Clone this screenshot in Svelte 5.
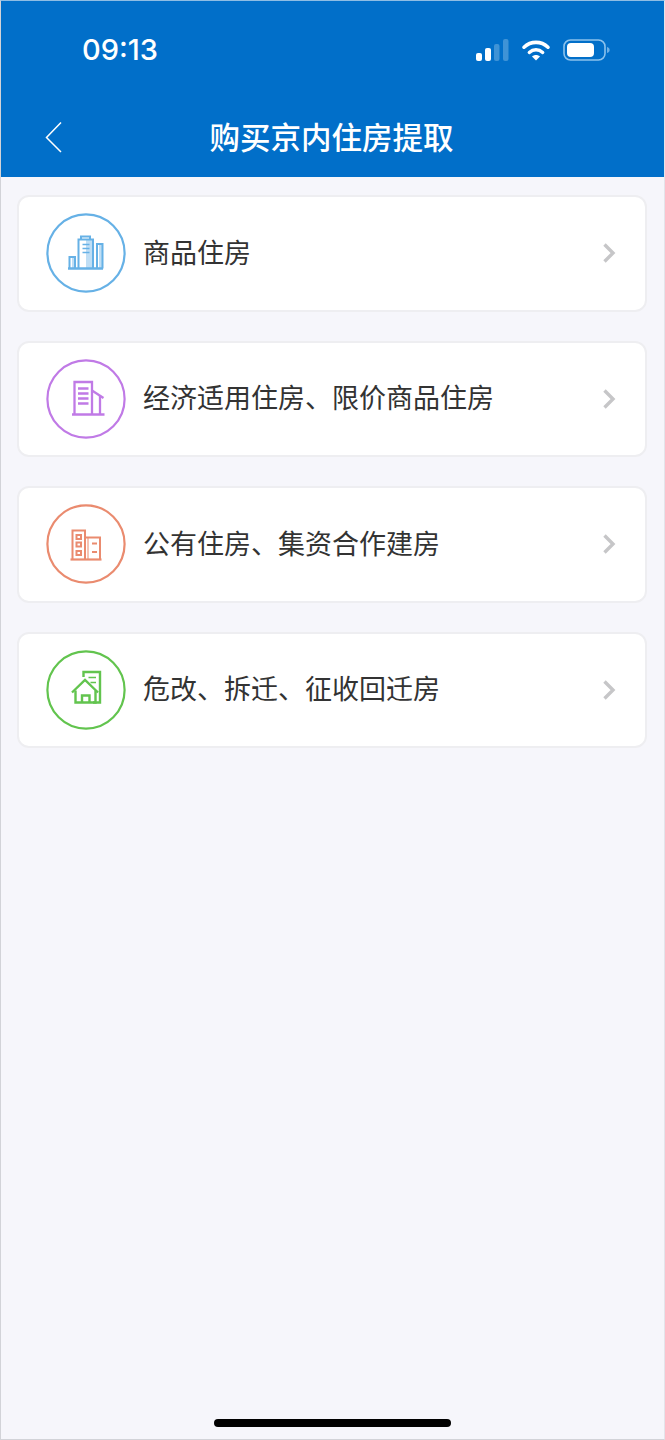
<script>
  const items = [
    { label: '商品住房', icon: 'a', color: '#66b1e6' },
    { label: '经济适用住房、限价商品住房', icon: 'b', color: '#c07ae6' },
    { label: '公有住房、集资合作建房', icon: 'c', color: '#ea8b6f' },
    { label: '危改、拆迁、征收回迁房', icon: 'd', color: '#62c44e' }
  ];
</script>

<div class="page">
  <header class="header">
    <div class="status">
      <span class="time">09:13</span>
      <div class="status-icons">
        <svg class="signal" width="34" height="22" viewBox="0 0 34 22" aria-hidden="true">
          <rect x="1" y="14" width="6" height="8" rx="2" fill="#fff" />
          <rect x="10" y="9" width="6" height="13" rx="2" fill="#fff" />
          <rect x="19" y="5" width="5.5" height="17" rx="2" fill="#3f93d6" />
          <rect x="28" y="0" width="5.5" height="22" rx="2" fill="#3f93d6" />
        </svg>
        <svg class="wifi" width="30" height="22" viewBox="0 0 30 22" aria-hidden="true">
          <path d="M3 8.2C9.8 1.8 20.2 1.8 27 8.2" fill="none" stroke="#fff" stroke-width="3.6" stroke-linecap="round" />
          <path d="M8.3 13.400C12.200 9.900 17.800 9.900 21.700 13.400" fill="none" stroke="#fff" stroke-width="3.4" stroke-linecap="round" />
          <path d="M11 17.4C13.3 15.4 16.7 15.4 19 17.4L15 21.6Z" fill="#fff" />
        </svg>
        <svg class="battery" width="47" height="22" viewBox="0 0 47 22" aria-hidden="true">
          <rect x="1" y="1" width="41" height="20" rx="6.5" fill="none" stroke="#8cc2ec" stroke-width="1.6" />
          <rect x="4" y="4" width="27" height="14" rx="4" fill="#fff" />
          <path d="M44 8c2 .5 2.6 1.6 2.6 3s-.6 2.5-2.6 3Z" fill="#6fb0e6" />
        </svg>
      </div>
    </div>
    <div class="nav">
      <svg class="back" width="20" height="32" viewBox="0 0 20 32" aria-hidden="true">
        <path d="M17 1.5 2.5 16.5 17 31" fill="none" stroke="#fff" stroke-width="1.5" />
      </svg>
      <h1 class="title">购买京内住房提取</h1>
    </div>
  </header>

  <main class="list">
    {#each items as item}
      <div class="card">
        <svg class="icon" width="80" height="80" viewBox="0 0 80 80" fill="none" stroke={item.color} aria-hidden="true">
          <circle cx="40" cy="40" r="38.600" stroke-width="2.200" />
          {#if item.icon === 'a'}
            <path d="M40 26h6v29.500h-6zM53 31h3v24.500h-3zM26 45h3v10.500h-3z" fill="#bfdef5" stroke="none" />
            <g stroke-width="2">
              <path d="M22 55.500h35" stroke-width="2.400" />
              <path d="M32.500 55.500V26.500h14.500v29" />
              <path d="M35 26.500v-3h9v3" />
              <path d="M36.500 31.500h7M36.500 35.500h7M36.500 39.500h7" stroke-width="1.700" />
              <path d="M51 55.500V31h5.500v24.500" />
              <path d="M23.500 55.500V44h5.500v11.500" />
            </g>
          {:else if item.icon === 'b'}
            <g stroke-width="2.300">
              <path d="M26 55.500h32.500" />
              <path d="M28.500 55.500V23h17.500v32.500" />
              <path d="M32 29.500h10.500M32 34.500h10.500M32 39.500h10.500M32 44.500h10.500" />
              <path d="M46 31.500l11.500 7.500" />
              <path d="M54 37v18.500" />
            </g>
          {:else if item.icon === 'c'}
            <g stroke-width="2">
              <path d="M24.500 55.500h31" stroke-width="2.200" />
              <path d="M26.500 55.500V26.500h12.500v29" />
              <path d="M39 33.500h15v22" />
              <rect x="30.500" y="31" width="4.500" height="4" />
              <rect x="30.500" y="38.500" width="4.500" height="4" />
              <rect x="30.500" y="47" width="4.500" height="4" />
              <path d="M46 39.500h5M46 48h5" />
              <path d="M42 33.500v22" stroke-width="1" />
            </g>
          {:else}
            <g stroke-width="2.400">
              <path d="M37.500 27V22h16.500v30.500H47" />
              <path d="M42.500 27.500h7.500M44.500 32.500h5.500" stroke-width="1.700" />
              <path d="M26 42.500 39 30l13 12.500" />
              <path d="M29.500 40.500v12h20v-12" />
              <path d="M36 52.500v-7h7.500v7" />
            </g>
          {/if}
        </svg>
        <span class="label">{item.label}</span>
        <svg class="chevron" width="14" height="22" viewBox="0 0 14 22" aria-hidden="true">
          <path d="M2.500 2.500 11 11 2.500 19.500" fill="none" stroke="#c6c6c8" stroke-width="3.400" />
        </svg>
      </div>
    {/each}
  </main>

  <div class="home-indicator"></div>
</div>

<style>
  :global(body) {
    margin: 0;
    background: #f6f6fb;
  }

  .page {
    position: relative;
    box-sizing: border-box;
    width: 665px;
    height: 1440px;
    display: flex;
    flex-direction: column;
    background: #f6f6fb;
    border: 1px solid #d2d3d8;
    border-top-color: #8fbde4;
    border-right-color: #e4e4ea;
    font-family: "Noto Sans CJK SC", "Noto Sans", sans-serif;
  }

  .header {
    height: 176px;
    flex: none;
    display: flex;
    flex-direction: column;
    background: #016fc9;
    color: #fff;
  }

  .status {
    height: 96px;
    flex: none;
    display: flex;
    align-items: center;
    justify-content: space-between;
    padding: 0 54px 0 81px;
  }

  .time {
    font-family: Inter, Roboto, sans-serif;
    font-size: 29px;
    font-weight: 500;
    line-height: 1;
  }

  .status-icons {
    display: flex;
    align-items: center;
    gap: 12px;
    margin-top: 1px;
  }

  .nav {
    position: relative;
    flex: 1;
    display: flex;
    align-items: center;
    justify-content: center;
    padding: 0 2px 1px 0;
  }

  .back {
    position: absolute;
    left: 43px;
    top: 24px;
  }

  .title {
    margin: 0;
    font-size: 30.500px;
    font-weight: 500;
    line-height: 1.2;
  }

  .list {
    display: flex;
    flex-direction: column;
    gap: 29.100px;
    padding: 18px 17px 0 16px;
  }

  .card {
    box-sizing: border-box;
    height: 116.500px;
    display: flex;
    align-items: center;
    padding: 0 29px 0 28px;
    background: #fff;
    border: 2px solid #eeeef1;
    border-radius: 12px;
  }

  .icon {
    flex: none;
    margin-left: -1px;
  }

  .label {
    flex: 1;
    margin-left: 17px;
    padding-bottom: 3px;
    font-size: 27px;
    line-height: 1.2;
    color: #333;
  }

  .chevron {
    flex: none;
  }

  .home-indicator {
    position: absolute;
    left: 213px;
    bottom: 12px;
    width: 237px;
    height: 8px;
    border-radius: 4px;
    background: #000;
  }
</style>
